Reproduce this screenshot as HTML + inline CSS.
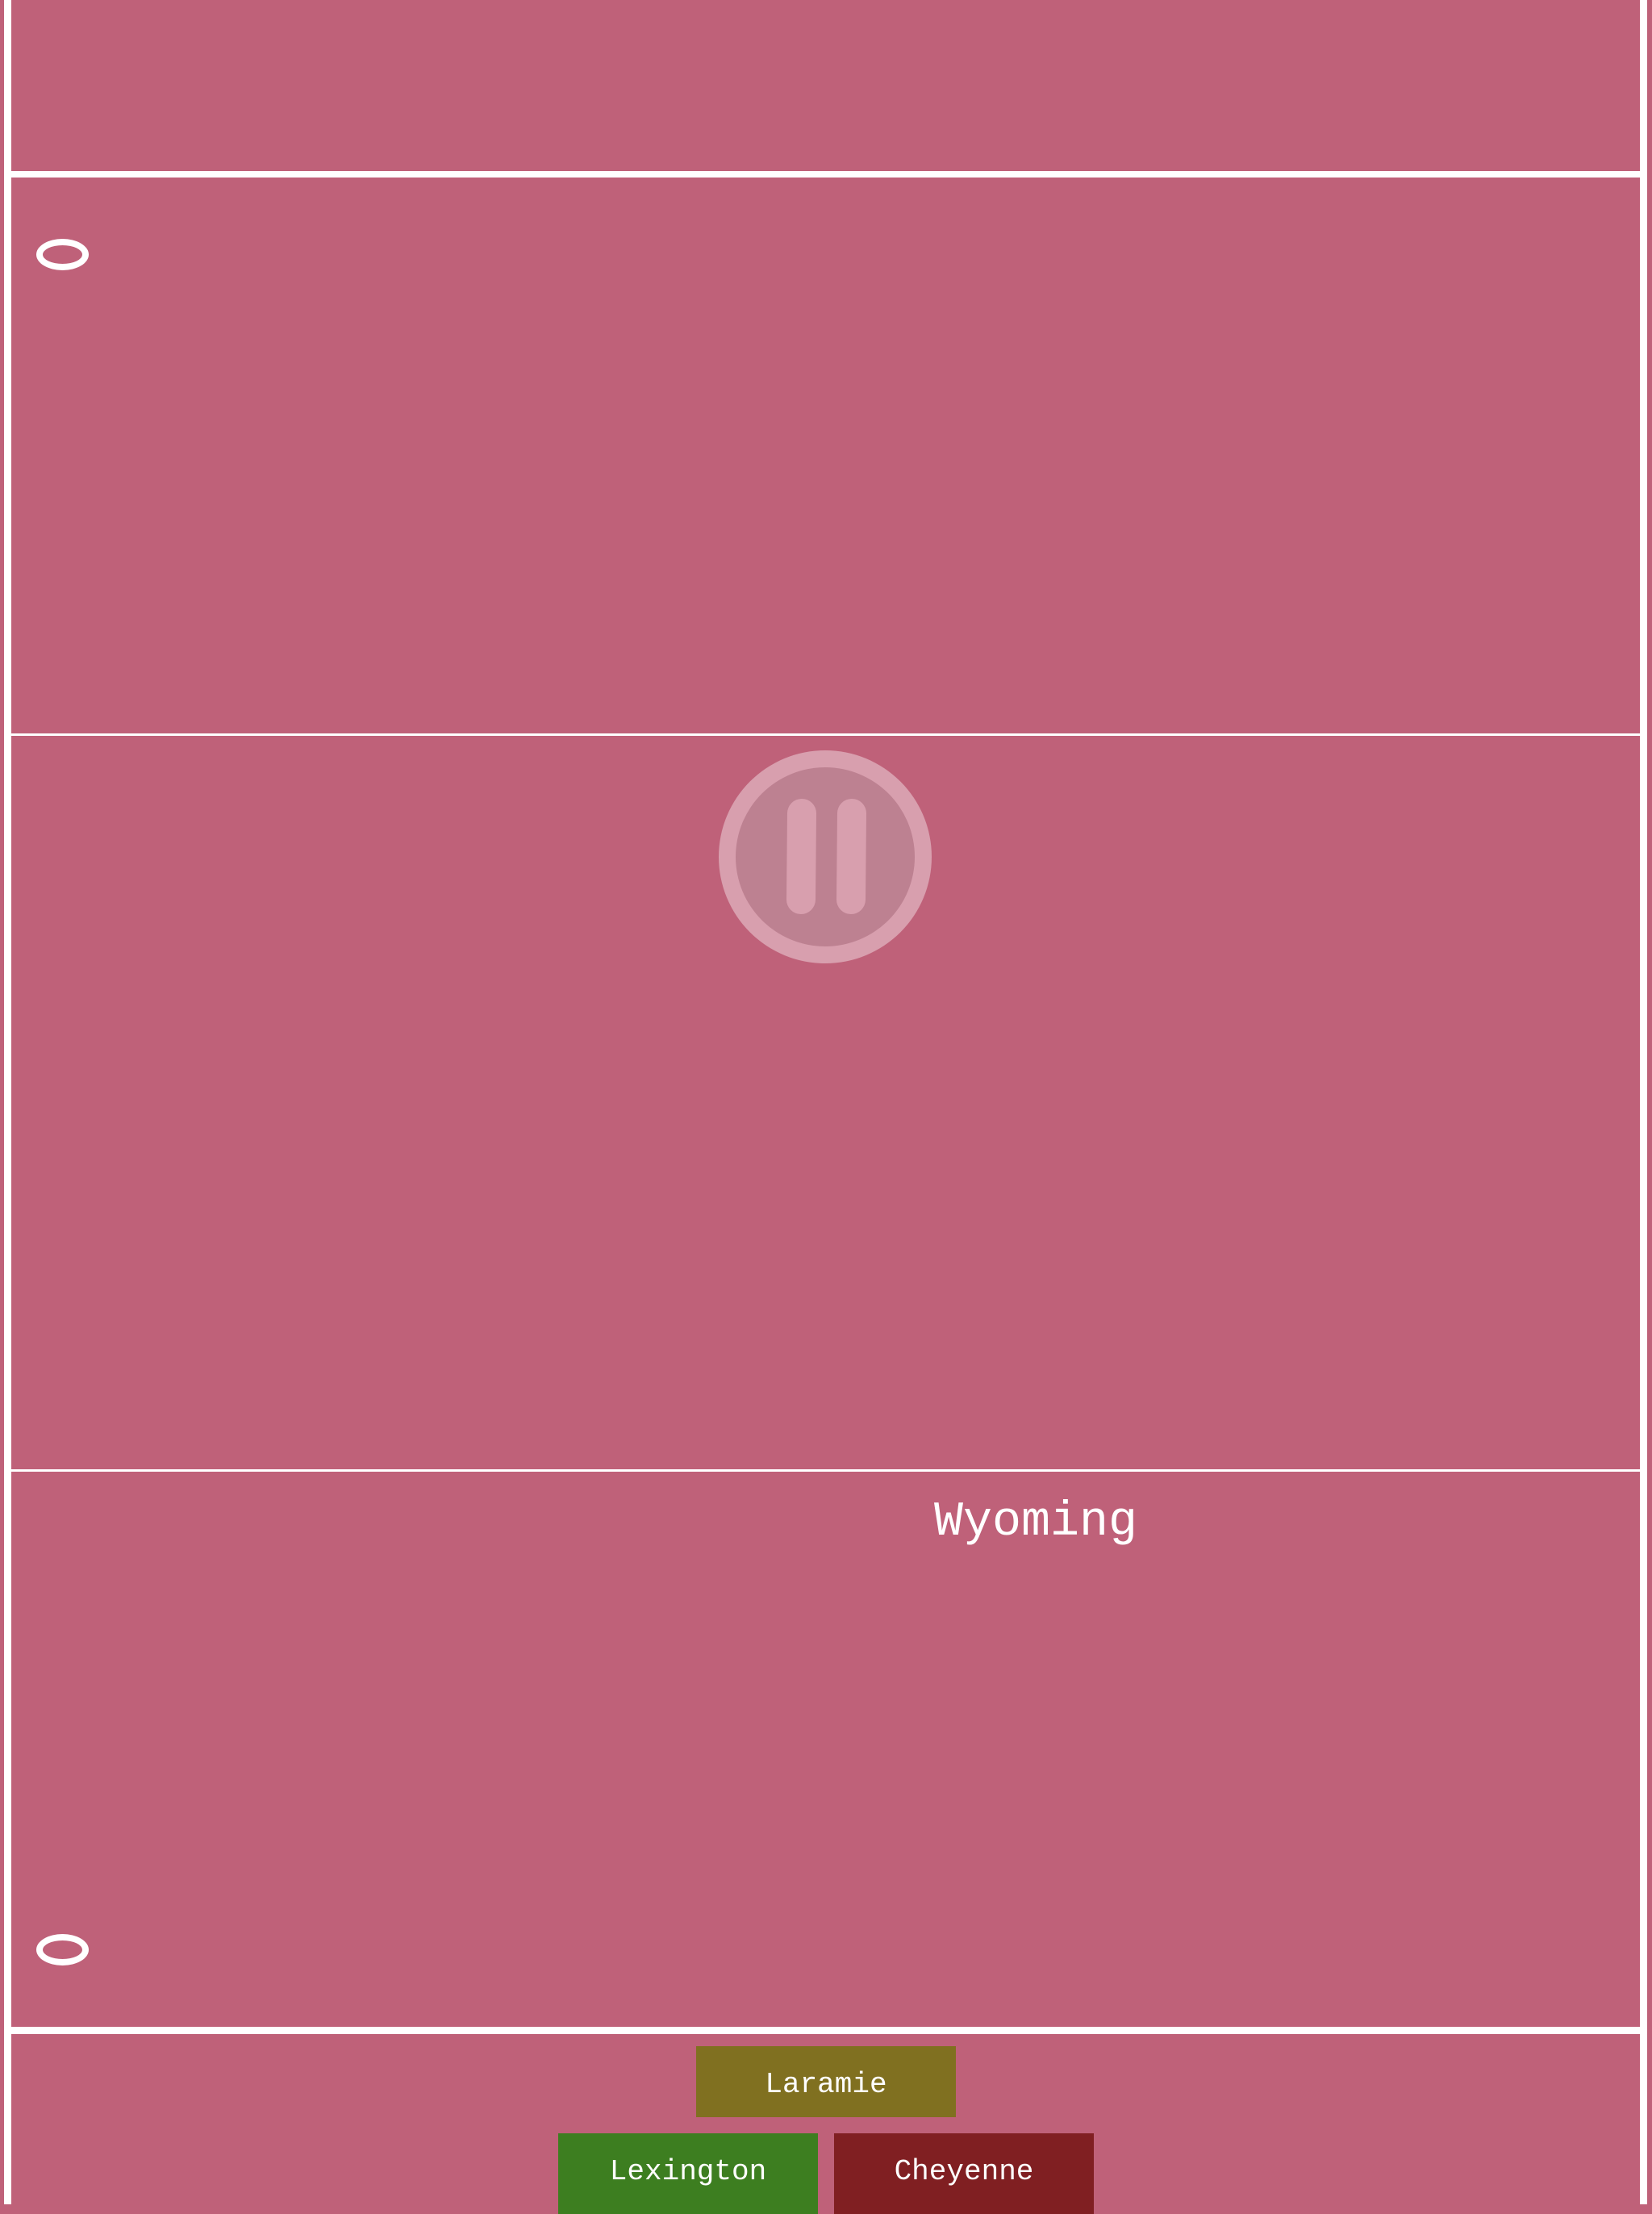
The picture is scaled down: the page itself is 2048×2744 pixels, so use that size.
<!DOCTYPE html>
<html><head><style>
html,body{margin:0;padding:0;}
body{width:2048px;height:2732px;background:#bf6179;position:relative;overflow:hidden;font-family:"Liberation Mono",monospace;color:#fff;}
.a{position:absolute;}
.w{background:#fff;}
.btn{position:absolute;font-size:36px;text-align:center;line-height:88px;}
</style></head><body>
<div class="a w" style="left:5px;top:0;width:9px;height:2732px"></div>
<div class="a w" style="left:2033px;top:0;width:9px;height:2732px"></div>
<div class="a w" style="left:14px;top:212px;width:2019px;height:8px"></div>
<div class="a w" style="left:14px;top:909px;width:2019px;height:3px"></div>
<div class="a w" style="left:14px;top:1821px;width:2019px;height:3px"></div>
<div class="a w" style="left:14px;top:2512px;width:2019px;height:9px"></div>
<div class="a" style="left:45px;top:296px;width:49px;height:23px;border:8px solid #fff;border-radius:50%"></div>
<div class="a" style="left:45px;top:2397px;width:49px;height:23px;border:8px solid #fff;border-radius:50%"></div>
<svg class="a" style="left:890px;top:930px" width="266" height="266" viewBox="0 0 266 266">
<circle cx="133" cy="132" r="132" fill="#d89fae"/>
<circle cx="133" cy="132" r="111" fill="#bd8191"/>
<line x1="104" y1="78" x2="103" y2="185" stroke="#d89fae" stroke-width="36" stroke-linecap="round"/>
<line x1="166" y1="78" x2="165" y2="185" stroke="#d89fae" stroke-width="36" stroke-linecap="round"/>
</svg>
<div class="a" style="left:1158px;top:1852px;font-size:60px;line-height:70px">Wyoming</div>
<div class="btn" style="left:863px;top:2536px;width:322px;height:88px;background:#807020;line-height:96px">Laramie</div>
<div class="btn" style="left:692px;top:2644px;width:322px;height:100px;background:#3d7e20;line-height:96px">Lexington</div>
<div class="btn" style="left:1034px;top:2644px;width:322px;height:100px;background:#801f22;line-height:96px">Cheyenne</div>
</body></html>
